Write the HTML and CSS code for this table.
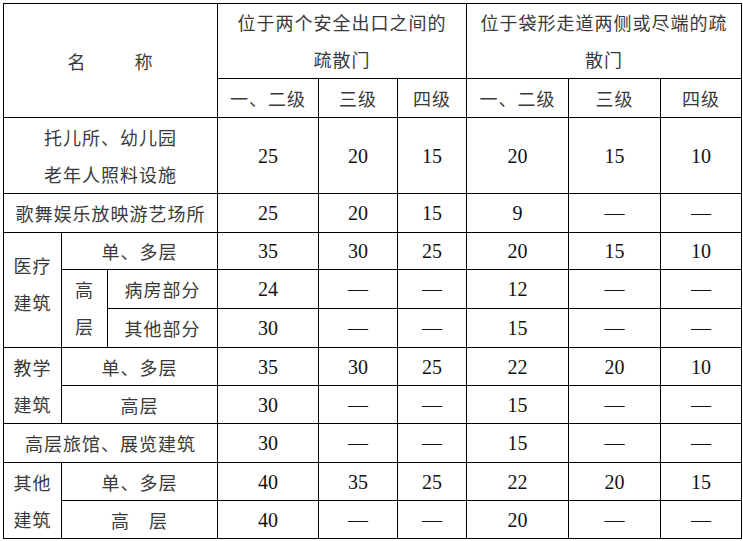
FILE: index.html
```html
<!DOCTYPE html>
<html lang="zh-CN">
<head>
<meta charset="utf-8">
<title>疏散门距离表</title>
<link rel="stylesheet" href="styles.css">
</head>
<body>
<table class="spec">
  <colgroup>
    <col class="c1"><col class="c2"><col class="c3"><col class="c4"><col class="c5"><col class="c6"><col class="c7"><col class="c8"><col class="c9">
  </colgroup>
  <tr class="hhead">
    <th colspan="3" rowspan="2" class="zh">名<span class="gap"></span>称</th>
    <th colspan="3" class="zh multi">位于两个安全出口之间的<br>疏散门</th>
    <th colspan="3" class="zh multi">位于袋形走道两侧或尽端的疏<br>散门</th>
  </tr>
  <tr class="h39">
    <th class="zh">一、二级</th><th class="zh">三级</th><th class="zh">四级</th>
    <th class="zh">一、二级</th><th class="zh">三级</th><th class="zh">四级</th>
  </tr>
  <tr class="h76">
    <td colspan="3" class="zh multi">托儿所、幼儿园<br>老年人照料设施</td>
    <td class="n">25</td><td class="n">20</td><td class="n">15</td><td class="n">20</td><td class="n">15</td><td class="n">10</td>
  </tr>
  <tr class="h39">
    <td colspan="3" class="zh">歌舞娱乐放映游艺场所</td>
    <td class="n">25</td><td class="n">20</td><td class="n">15</td><td class="n">9</td><td class="n">—</td><td class="n">—</td>
  </tr>
  <tr class="h37">
    <td rowspan="3" class="zh tight">医疗<br>建筑</td>
    <td colspan="2" class="zh">单、多层</td>
    <td class="n">35</td><td class="n">30</td><td class="n">25</td><td class="n">20</td><td class="n">15</td><td class="n">10</td>
  </tr>
  <tr class="h39">
    <td rowspan="2" class="zh wide">高<br>层</td>
    <td class="zh">病房部分</td>
    <td class="n">24</td><td class="n">—</td><td class="n">—</td><td class="n">12</td><td class="n">—</td><td class="n">—</td>
  </tr>
  <tr class="h39">
    <td class="zh">其他部分</td>
    <td class="n">30</td><td class="n">—</td><td class="n">—</td><td class="n">15</td><td class="n">—</td><td class="n">—</td>
  </tr>
  <tr class="h38">
    <td rowspan="2" class="zh multi">教学<br>建筑</td>
    <td colspan="2" class="zh">单、多层</td>
    <td class="n">35</td><td class="n">30</td><td class="n">25</td><td class="n">22</td><td class="n">20</td><td class="n">10</td>
  </tr>
  <tr class="h38">
    <td colspan="2" class="zh">高层</td>
    <td class="n">30</td><td class="n">—</td><td class="n">—</td><td class="n">15</td><td class="n">—</td><td class="n">—</td>
  </tr>
  <tr class="h39">
    <td colspan="3" class="zh">高层旅馆、展览建筑</td>
    <td class="n">30</td><td class="n">—</td><td class="n">—</td><td class="n">15</td><td class="n">—</td><td class="n">—</td>
  </tr>
  <tr class="h38">
    <td rowspan="2" class="zh multi">其他<br>建筑</td>
    <td colspan="2" class="zh">单、多层</td>
    <td class="n">40</td><td class="n">35</td><td class="n">25</td><td class="n">22</td><td class="n">20</td><td class="n">15</td>
  </tr>
  <tr class="h38">
    <td colspan="2" class="zh">高　层</td>
    <td class="n">40</td><td class="n">—</td><td class="n">—</td><td class="n">20</td><td class="n">—</td><td class="n">—</td>
  </tr>
</table>
</body>
</html>
```
FILE: styles.css
```css
html, body {
  background: #ffffff;
}
body {
  margin: 0;
  padding: 3px 0 0 3px;
}
.spec {
  border-collapse: collapse;
  table-layout: fixed;
  width: 738px;
}
.spec th,
.spec td {
  border: 1px solid #000;
  padding: 0;
  text-align: center;
  vertical-align: middle;
  font-weight: normal;
}
.c1 { width: 58px; }
.c2 { width: 46px; }
.c3 { width: 110px; }
.c4 { width: 101px; }
.c5 { width: 79px; }
.c6 { width: 69px; }
.c7 { width: 102px; }
.c8 { width: 92px; }
.c9 { width: 81px; }

.hhead { height: 74px; }
.h76 { height: 76px; }
.h39 { height: 39px; }
.h38 { height: 38px; }
.h37 { height: 37px; }

.zh {
  font-family: "Noto Sans CJK SC", "Noto Sans", sans-serif;
  font-size: 18px;
  letter-spacing: 1px;
  line-height: 30px;
  color: #3a3a3a;
}
.multi {
  line-height: 37px;
}
.spec .tight {
  line-height: 37px;
  padding-bottom: 12px;
}
.spec .wide {
  line-height: 37px;
  padding-bottom: 2px;
}
.n {
  font-family: "Liberation Serif", "Times New Roman", serif;
  font-size: 20px;
  line-height: 30px;
  padding-top: 2px;
  color: #111;
}
.gap {
  display: inline-block;
  width: 48px;
}
```
